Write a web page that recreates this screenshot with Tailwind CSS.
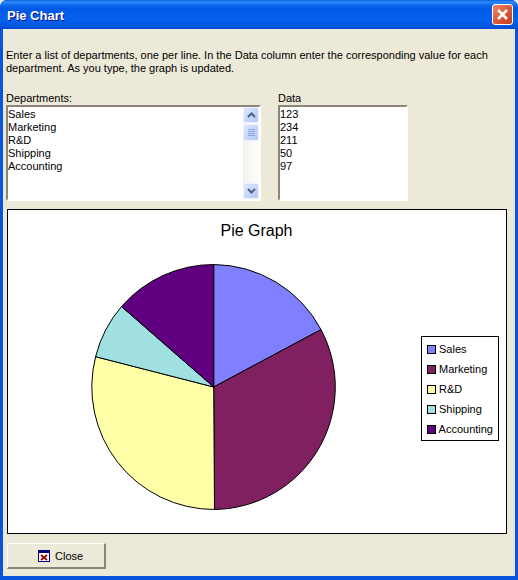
<!DOCTYPE html>
<html lang="en">
<head>
  <meta charset="UTF-8" />
  <title>Pie Chart</title>
  <script src="https://cdn.jsdelivr.net/npm/@tailwindcss/browser@4"></script>
</head>
<body class="w-[518px] h-[580px] overflow-hidden bg-[#ece9d8] font-['Liberation_Sans',sans-serif] text-[11px] text-black">
  <div class="h-[580px] flex flex-col rounded-t-[7px] bg-[#0855dd] overflow-hidden">
    <!-- title bar -->
    <div class="h-[29px] shrink-0 flex items-center justify-between pl-[7px] pr-[5px] bg-[linear-gradient(to_bottom,#0a5ce0_0px,#2f8cfb_2px,#0f69ef_5px,#0058e6_9px,#0462ee_20px,#0353dc_27px,#0349cf_29px)]">
      <span class="pt-[2px] text-white font-bold text-[13px] [text-shadow:1px_1px_0_#0f1089]">Pie Chart</span>
      <div class="w-[21px] h-[21px] rounded-[3px] border border-white bg-gradient-to-br from-[#e98a6c] via-[#dd5a35] to-[#c2401f] flex items-center justify-center">
        <svg width="13" height="13" viewBox="0 0 13 13"><path d="M2 2 L11 11 M11 2 L2 11" stroke="#fff" stroke-width="2.6" /></svg>
      </div>
    </div>
    <!-- client area -->
    <div class="flex-1 mx-[3px] mb-[4px] bg-[#ece9d8] pl-[3px] pr-[8px] flex flex-col">
      <p class="mt-[20px] leading-[13px] w-[490px]">Enter a list of departments, one per line. In the Data column enter the corresponding value for each department. As you type, the graph is updated.</p>
      <div class="mt-[17px] flex">
        <div class="w-[255px]">
          <div class="leading-[13px] h-[13px]">Departments:</div>
          <div class="h-[96px] flex border-2 border-[#ffffff] border-t-[#8a8778] border-l-[#8a8778] bg-white">
            <div class="flex-1 leading-[13px] pt-[1px]">
              <div>Sales</div>
              <div>Marketing</div>
              <div>R&amp;D</div>
              <div>Shipping</div>
              <div>Accounting</div>
            </div>
            <div class="w-[16px] flex flex-col justify-between bg-gradient-to-r from-[#f3f1ec] to-[#fefefb]">
              <div>
                <div class="h-[16px] rounded-[2px] border border-[#eef2fe] bg-gradient-to-br from-[#dbe6fe] to-[#b4c9f7] flex items-center justify-center">
                  <svg width="9" height="6" viewBox="0 0 9 6"><path d="M1 5 L4.5 1.5 L8 5" fill="none" stroke="#4d6185" stroke-width="2" /></svg>
                </div>
                <div class="h-[17px] mt-[1px] rounded-[2px] border border-[#eef2fe] bg-gradient-to-br from-[#dbe6fe] to-[#b4c9f7] flex flex-col items-center justify-center gap-[1px]">
                  <div class="w-[7px] h-[1px] bg-[#8ba4dc]"></div>
                  <div class="w-[7px] h-[1px] bg-[#8ba4dc]"></div>
                  <div class="w-[7px] h-[1px] bg-[#8ba4dc]"></div>
                  <div class="w-[7px] h-[1px] bg-[#8ba4dc]"></div>
                </div>
              </div>
              <div class="h-[16px] rounded-[2px] border border-[#eef2fe] bg-gradient-to-br from-[#dbe6fe] to-[#b4c9f7] flex items-center justify-center">
                <svg width="9" height="6" viewBox="0 0 9 6"><path d="M1 1 L4.5 4.5 L8 1" fill="none" stroke="#4d6185" stroke-width="2" /></svg>
              </div>
            </div>
          </div>
        </div>
        <div class="w-[130px] ml-[17px]">
          <div class="leading-[13px] h-[13px]">Data</div>
          <div class="h-[96px] border-2 border-[#ffffff] border-t-[#8a8778] border-l-[#8a8778] bg-white leading-[13px] pt-[1px]">
            <div>123</div>
            <div>234</div>
            <div>211</div>
            <div>50</div>
            <div>97</div>
          </div>
        </div>
      </div>
      <!-- chart -->
      <div class="mt-[8px] ml-[1px] h-[325px] border border-black bg-white flex flex-col">
        <div class="text-center text-[16px] leading-[18px] mt-[12px] pr-[1px]">Pie Graph</div>
        <div class="flex items-center mt-[24px] pl-[83px] pr-[7px]">
          <svg width="246" height="247" viewBox="91 264 246 247" class="shrink-0" stroke="#000" stroke-width="1">
            <path d="M213.7 387 L213.7 264.5 A122.5 122.5 0 0 1 321 329.6 Z" fill="#8080ff" />
            <path d="M213.7 387 L321 329.6 A122.5 122.5 0 0 1 214.5 509.5 Z" fill="#802060" />
            <path d="M213.7 387 L214.5 509.5 A122.5 122.5 0 0 1 95.6 356.7 Z" fill="#ffffa8" />
            <path d="M213.7 387 L95.6 356.7 A122.5 122.5 0 0 1 121.5 306.5 Z" fill="#a0e0e0" />
            <path d="M213.7 387 L121.5 306.5 A122.5 122.5 0 0 1 213.7 264.5 Z" fill="#600080" />
          </svg>
          <div class="ml-auto mt-[2px] w-[78px] h-[105px] border border-black px-[5px] pt-[2px] pb-[4px] flex flex-col justify-between leading-[20px]">
            <div class="flex items-center gap-[3px] whitespace-nowrap"><span class="w-[9px] h-[9px] border border-black bg-[#8080ff]"></span>Sales</div>
            <div class="flex items-center gap-[3px] whitespace-nowrap"><span class="w-[9px] h-[9px] border border-black bg-[#802060]"></span>Marketing</div>
            <div class="flex items-center gap-[3px] whitespace-nowrap"><span class="w-[9px] h-[9px] border border-black bg-[#ffffa8]"></span>R&amp;D</div>
            <div class="flex items-center gap-[3px] whitespace-nowrap"><span class="w-[9px] h-[9px] border border-black bg-[#a0e0e0]"></span>Shipping</div>
            <div class="flex items-center gap-[3px] whitespace-nowrap"><span class="w-[9px] h-[9px] border border-black bg-[#600080]"></span>Accounting</div>
          </div>
        </div>
      </div>
      <!-- close button -->
      <div class="mt-[9px] ml-[1px] w-[99px] h-[26px] border border-white border-r-2 border-b-2 border-r-[#8a8778] border-b-[#8a8778] flex items-center pl-[30px] pt-[1px] gap-[5px]">
        <svg width="12" height="12" viewBox="0 0 12 12">
          <rect x="0.5" y="0.5" width="11" height="11" fill="#fff" stroke="#000080" />
          <rect x="1" y="1" width="10" height="2" fill="#000080" />
          <path d="M3 5 L9 10 M9 5 L3 10" stroke="#a00000" stroke-width="1.8" />
        </svg>
        <span>Close</span>
      </div>
    </div>
  </div>
</body>
</html>
